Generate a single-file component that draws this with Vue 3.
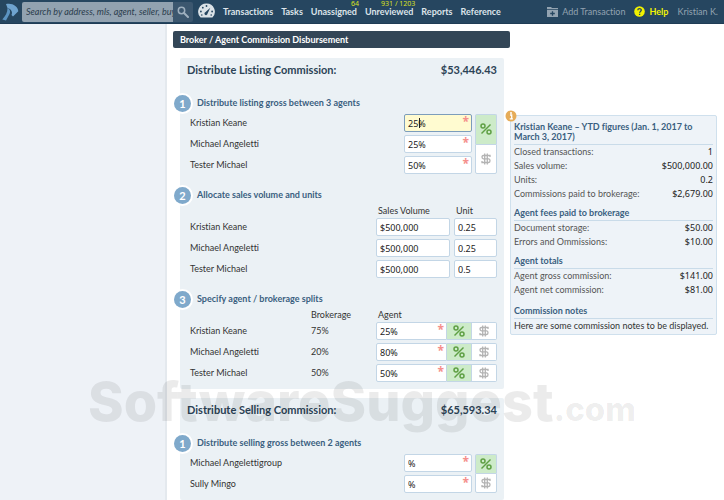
<script setup>
import { reactive } from 'vue'

const links = [
  { text: 'Transactions' },
  { text: 'Tasks' },
  { text: 'Unassigned', badge: '64' },
  { text: 'Unreviewed', badge: '931 / 1203' },
  { text: 'Reports' },
  { text: 'Reference' },
]

const gross = reactive({
  unit: '%',
  rows: [
    { name: 'Kristian Keane', value: '25%', active: true },
    { name: 'Michael Angeletti', value: '25%' },
    { name: 'Tester Michael', value: '50%' },
  ],
})

const volumes = reactive([
  { name: 'Kristian Keane', volume: '$500,000', unit: '0.25' },
  { name: 'Michael Angeletti', volume: '$500,000', unit: '0.25' },
  { name: 'Tester Michael', volume: '$500,000', unit: '0.5' },
])

const splits = reactive([
  { name: 'Kristian Keane', brokerage: '75%', agent: '25%', unit: '%' },
  { name: 'Michael Angeletti', brokerage: '20%', agent: '80%', unit: '%' },
  { name: 'Tester Michael', brokerage: '50%', agent: '50%', unit: '%' },
])

const selling = reactive({
  unit: '%',
  rows: [
    { name: 'Michael Angelettigroup', value: '%' },
    { name: 'Sully Mingo', value: '%' },
  ],
})

const figures = [
  {
    title: 'Kristian Keane – YTD figures (Jan. 1, 2017 to March 3, 2017)',
    rows: [
      ['Closed transactions:', '1'],
      ['Sales volume:', '$500,000.00'],
      ['Units:', '0.2'],
      ['Commissions paid to brokerage:', '$2,679.00'],
    ],
  },
  {
    title: 'Agent fees paid to brokerage',
    rows: [
      ['Document storage:', '$50.00'],
      ['Errors and Ommissions:', '$10.00'],
    ],
  },
  {
    title: 'Agent totals',
    rows: [
      ['Agent gross commission:', '$141.00'],
      ['Agent net commission:', '$81.00'],
    ],
  },
]

const units = ['%', '$']
</script>

<template>
  <div class="page">
    <header class="topbar">
      <a class="logo" href="#" aria-label="Home">
        <svg width="17" height="18" viewBox="0 0 17 18">
          <path d="M4 1C10-.5 16 3 16.300 8.200L11 13.500 9.500 12C11 8.500 9 6 5.500 5z" fill="#6fa3cf" />
          <path d="M5.500 5C8.500 6.500 8.500 9 7.500 11L4 17.500.300 16.500C3.500 13 5.500 9.500 5.500 5z" fill="#5b93c2" />
        </svg>
      </a>
      <form class="search" @submit.prevent>
        <input type="text" aria-label="Search" placeholder="Search by address, mls, agent, seller, buy" />
        <button type="submit" aria-label="Search">
          <svg width="12" height="12" viewBox="0 0 12 12" fill="none" stroke="#9fb0bf">
            <circle cx="4.5" cy="4.5" r="3.2" stroke-width="1.5" />
            <path d="M7 7l4 4" stroke-width="2" stroke-linecap="round" />
          </svg>
        </button>
      </form>
      <a class="gauge" href="#" aria-label="Dashboard">
        <svg width="17" height="17" viewBox="0 0 17 17">
          <path d="M8.500 0.500A8.200 8.200 0 0 0 2.600 14.500h11.800A8.200 8.200 0 0 0 8.500 .5z" fill="#dbe2e7" />
          <path d="M12.300 4.800L9.600 10.600a1.600 1.600 0 1 1-2-1.600z" fill="#264660" />
          <g fill="#264660">
            <circle cx="8.500" cy="3" r=".9" /><circle cx="4.800" cy="4.700" r=".9" />
            <circle cx="2.900" cy="8.500" r=".9" /><circle cx="14.100" cy="8.500" r=".9" />
            <circle cx="3.800" cy="12" r=".8" /><circle cx="13.200" cy="12" r=".8" />
          </g>
        </svg>
      </a>
      <nav class="nav">
        <a v-for="l in links" :key="l.text" href="#">
          {{ l.text }}<span v-if="l.badge" class="badge">{{ l.badge }}</span>
        </a>
      </nav>
      <div class="account">
        <a class="add" href="#">
          <svg width="11" height="11" viewBox="0 0 11 11">
            <path d="M0 1h4l1 1h6v1.200H0zM0 4h11v7H0z" fill="#93a3b1" />
            <path d="M5.500 5.200v4.600M3.200 7.500h4.600" stroke="#264660" stroke-width="1.300" />
          </svg>
          Add Transaction
        </a>
        <a class="help" href="#">
          <svg width="11" height="11" viewBox="0 0 11 11">
            <circle cx="5.500" cy="5.500" r="5.300" fill="#f2f200" />
            <path d="M3.800 4.300c0-2.300 3.500-2.200 3.500-.2 0 1.300-1.700 1.300-1.700 2.600M5.600 7.700v1.300" fill="none" stroke="#264660" stroke-width="1.300" />
          </svg>
          Help
        </a>
        <a class="user" href="#">Kristian K.</a>
      </div>
    </header>

    <div class="body">
      <div class="sidebar"></div>
      <main class="main">
        <div class="form">
          <h1 class="title">Broker / Agent Commission Disbursement</h1>

          <section class="panel">
            <h2 class="panel-head"><span>Distribute Listing Commission:</span><span>$53,446.43</span></h2>

            <div class="step">
              <h3><span class="num">1</span>Distribute listing gross between 3 agents</h3>
              <div class="gross">
                <div class="rows">
                  <div v-for="(r, i) in gross.rows" :key="r.name" class="row">
                    <label :for="'gross' + i">{{ r.name }}</label>
                    <span class="field required">
                      <input :id="'gross' + i" v-model="r.value" type="text" :class="{ active: r.active }" />
                      <i v-if="r.active" class="caret"></i>
                    </span>
                  </div>
                </div>
                <div class="toggle vertical">
                  <button v-for="u in units" :key="u" type="button" :aria-label="u" :class="{ on: gross.unit === u }" @click="gross.unit = u">
                    <svg v-if="u === '%'" width="12" height="12" viewBox="0 0 12 12" fill="none" stroke="currentColor" stroke-width="1.500"><circle cx="3" cy="3" r="2" /><circle cx="9" cy="9" r="2" /><path d="M10.500 1.500l-9 9" /></svg>
                    <svg v-else width="10" height="12" viewBox="0 0 10 12" fill="none" stroke="currentColor" stroke-width="1.300"><path d="M9 4V2.500H2.300Q1 2.500 1 4t1.300 1.800h5.400Q9 6 9 7.700T7.700 9.500H1V8M3.700.5v11M6.300.5v11" /></svg>
                  </button>
                </div>
              </div>
            </div>

            <div class="step">
              <h3><span class="num">2</span>Allocate sales volume and units</h3>
              <div class="row volume labels"><span></span><span>Sales Volume</span><span>Unit</span></div>
              <div class="rows">
                <div v-for="(r, i) in volumes" :key="r.name" class="row volume">
                  <label :for="'volume' + i">{{ r.name }}</label>
                  <input :id="'volume' + i" v-model="r.volume" type="text" />
                  <input v-model="r.unit" type="text" :aria-label="r.name + ' unit'" />
                </div>
              </div>
            </div>

            <div class="step">
              <h3><span class="num">3</span>Specify agent / brokerage splits</h3>
              <div class="row split labels"><span></span><span>Brokerage</span><span>Agent</span></div>
              <div class="rows">
                <div v-for="(r, i) in splits" :key="r.name" class="row split">
                  <label :for="'split' + i">{{ r.name }}</label>
                  <span>{{ r.brokerage }}</span>
                  <div class="combo">
                    <span class="field required"><input :id="'split' + i" v-model="r.agent" type="text" /></span>
                    <div class="toggle">
                      <button v-for="u in units" :key="u" type="button" :aria-label="u" :class="{ on: r.unit === u }" @click="r.unit = u">
                        <svg v-if="u === '%'" width="12" height="12" viewBox="0 0 12 12" fill="none" stroke="currentColor" stroke-width="1.500"><circle cx="3" cy="3" r="2" /><circle cx="9" cy="9" r="2" /><path d="M10.500 1.500l-9 9" /></svg>
                        <svg v-else width="10" height="12" viewBox="0 0 10 12" fill="none" stroke="currentColor" stroke-width="1.300"><path d="M9 4V2.500H2.300Q1 2.500 1 4t1.300 1.800h5.400Q9 6 9 7.700T7.700 9.500H1V8M3.700.5v11M6.300.5v11" /></svg>
                      </button>
                    </div>
                  </div>
                </div>
              </div>
            </div>
          </section>

          <section class="panel">
            <h2 class="panel-head"><span>Distribute Selling Commission:</span><span>$65,593.34</span></h2>
            <div class="step">
              <h3><span class="num">1</span>Distribute selling gross between 2 agents</h3>
              <div class="gross">
                <div class="rows">
                  <div v-for="(r, i) in selling.rows" :key="r.name" class="row">
                    <label :for="'selling' + i">{{ r.name }}</label>
                    <span class="field required"><input :id="'selling' + i" v-model="r.value" type="text" /></span>
                  </div>
                </div>
                <div class="toggle vertical">
                  <button v-for="u in units" :key="u" type="button" :aria-label="u" :class="{ on: selling.unit === u }" @click="selling.unit = u">
                    <svg v-if="u === '%'" width="12" height="12" viewBox="0 0 12 12" fill="none" stroke="currentColor" stroke-width="1.500"><circle cx="3" cy="3" r="2" /><circle cx="9" cy="9" r="2" /><path d="M10.500 1.500l-9 9" /></svg>
                    <svg v-else width="10" height="12" viewBox="0 0 10 12" fill="none" stroke="currentColor" stroke-width="1.300"><path d="M9 4V2.500H2.300Q1 2.500 1 4t1.300 1.800h5.400Q9 6 9 7.700T7.700 9.500H1V8M3.700.5v11M6.300.5v11" /></svg>
                  </button>
                </div>
              </div>
            </div>
          </section>
        </div>

        <aside class="info">
          <svg class="info-icon" width="12" height="12" viewBox="0 0 12 12">
            <circle cx="6" cy="6" r="5.500" fill="#e6ac58" />
            <path d="M5 5h1.700v3.500M4.700 8.900h3.200" fill="none" stroke="#fff" stroke-width="1.300" />
            <circle cx="6" cy="2.900" r="1" fill="#fff" />
          </svg>
          <section v-for="f in figures" :key="f.title">
            <h4>{{ f.title }}</h4>
            <dl>
              <div v-for="r in f.rows" :key="r[0]"><dt>{{ r[0] }}</dt><dd>{{ r[1] }}</dd></div>
            </dl>
          </section>
          <section class="notes">
            <h4>Commission notes</h4>
            <p>Here are some commission notes to be displayed.</p>
          </section>
        </aside>
      </main>
    </div>
    <div class="watermark">SoftwareSuggest<small>.com</small></div>
  </div>
</template>

<style>
html {
  scrollbar-width: none;
}
body {
  margin: 0;
}
</style>

<style scoped>
* {
  box-sizing: border-box;
}
.page {
  position: relative;
  display: flex;
  flex-direction: column;
  min-height: 100vh;
  background: #fff;
  color: #333;
  font: 9px/14px Lato, "Noto Sans", sans-serif;
  font-variant-ligatures: none;
}
h1, h2, h3, h4, p, dl, dd {
  margin: 0;
}
a {
  color: inherit;
  text-decoration: none;
}
svg {
  display: block;
  flex: none;
}

.topbar {
  display: flex;
  align-items: center;
  height: 24px;
  padding: 0 6px 0 2px;
  background: #264660;
  border-bottom: 1px solid #1f3c55;
  color: #dde4ea;
  font-weight: 700;
}
.logo {
  width: 20px;
}
.search {
  display: flex;
  width: 171px;
  height: 20px;
  border-radius: 2px;
  overflow: hidden;
}
.search input {
  flex: 1;
  min-width: 0;
  padding: 0 0 0 4px;
  border: 0;
  border-radius: 0;
  background: #92a2b0;
  color: #2b3d4d;
  font: italic 9px/14px Lato, sans-serif;
}
.search input::placeholder {
  color: #2b3d4d;
  opacity: 1;
}
.search button {
  display: grid;
  place-items: center;
  width: 20px;
  padding: 0;
  border: 0;
  background: #3c576f;
}
.gauge {
  margin-left: 5px;
}
.nav {
  display: flex;
  gap: 8px;
  margin-left: 8px;
}
.nav a {
  position: relative;
}
.badge {
  position: absolute;
  right: -2px;
  top: -5px;
  color: #d9e021;
  font: 7px/8px "Noto Sans", sans-serif;
  white-space: nowrap;
}
.account {
  display: flex;
  gap: 9px;
  margin-left: auto;
  color: #93a3b1;
  font-weight: 400;
}
.account a {
  display: flex;
  align-items: center;
  gap: 4px;
}
.account .help {
  color: #f2f200;
  font-weight: 700;
}

.body {
  flex: 1;
  display: grid;
  grid-template-columns: 167fr 557fr;
}
.sidebar {
  background: #eef2f7;
  border-right: 2px solid #e4e9ee;
}
.main {
  display: grid;
  grid-template-columns: 337fr 207fr;
  align-items: start;
  padding: 7px 7px 0 6px;
}
.title {
  height: 17px;
  margin-bottom: 10px;
  padding-left: 7px;
  border-radius: 2px;
  background: #334657;
  color: #fff;
  font-size: 9px;
  line-height: 17px;
}
.panel {
  margin: 0 6px 9px 7px;
  padding: 0 7px 7px;
  border-radius: 2px;
  background: #ebf1f5;
}
.panel-head {
  display: flex;
  justify-content: space-between;
  color: #2c4356;
  font-size: 11px;
  line-height: 24px;
}
.step {
  margin-top: 12px;
  padding-left: 3px;
}
.step h3 {
  display: flex;
  align-items: center;
  gap: 6px;
  height: 18px;
  margin-left: -16px;
  color: #3a5f80;
  font-size: 9px;
}
.num {
  width: 17px;
  border-radius: 50%;
  background: #7fa9cb;
  box-shadow: 0 0 0 2px #fff;
  color: #fff;
  font-size: 11px;
  line-height: 17px;
  text-align: center;
}
.gross {
  display: flex;
  gap: 3px;
  margin-top: 2px;
}
.rows {
  flex: 1;
  display: grid;
  gap: 3px;
}
.row {
  display: grid;
  grid-template-columns: 1fr 68px;
  align-items: center;
}
.row.volume {
  grid-template-columns: 1fr 74px 43px;
  column-gap: 4px;
}
.row.split {
  grid-template-columns: 121fr 65fr 121px;
}
.labels {
  height: 14px;
}
.labels span:nth-child(n + 3) {
  padding-left: 2px;
}
.volume.labels span:nth-child(2) {
  padding-left: 2px;
}
.row input {
  width: 100%;
  min-width: 0;
  height: 18px;
  padding: 0 3px;
  border: 1px solid #c3d6e6;
  border-radius: 2px;
  background: #fff;
  color: #222;
  font: 9px/14px "Noto Sans", sans-serif;
}
.row input.active {
  border-color: #7c9dbb;
  background: #fffbd0;
}
.field {
  position: relative;
  display: block;
  flex: 1;
}
.required::after {
  content: "*";
  position: absolute;
  top: 1px;
  right: 3px;
  color: #f58f8b;
  font: 700 12px/14px "Noto Sans", sans-serif;
}
.caret {
  position: absolute;
  top: 4px;
  left: 15px;
  width: 1px;
  height: 10px;
  background: #222;
}
.toggle {
  display: flex;
}
.toggle button {
  display: grid;
  place-items: center;
  width: 25px;
  padding: 0;
  border: 1px solid #c3d6e6;
  border-left: 0;
  background: #fff;
  color: #b3b3b3;
}
.toggle button:last-child {
  border-radius: 0 2px 2px 0;
}
.toggle button.on {
  background: #cdebc9;
  color: #5fa044;
}
.toggle.vertical {
  flex-direction: column;
  width: 22px;
}
.toggle.vertical button {
  flex: 1;
  width: 100%;
  border-left: 1px solid #c3d6e6;
  border-radius: 0 0 2px 2px;
}
.toggle.vertical button:first-child {
  border-bottom: 0;
  border-radius: 2px 2px 0 0;
}
.combo {
  display: flex;
}
.combo input {
  border-radius: 2px 0 0 2px;
}

.info {
  position: relative;
  margin-top: 84px;
  padding: 6px 3px 1px;
  border: 1px solid #cfe0ed;
  border-radius: 2px;
  background: #eef3f8;
  color: #555;
}
.info-icon {
  position: absolute;
  top: -6px;
  left: -6px;
}
.info section + section {
  margin-top: 7px;
}
.info .notes {
  padding-top: 2px;
  color: #333;
}
.info h4 {
  padding-bottom: 2px;
  border-bottom: 1px solid #c9dbe9;
  color: #3a5f80;
  font-size: 9px;
  line-height: 10px;
}
.info dl div {
  display: flex;
  justify-content: space-between;
}
.info dd {
  color: #222;
  font-family: "Noto Sans", sans-serif;
}

.watermark {
  position: absolute;
  top: 369px;
  left: 88px;
  color: rgba(0, 0, 0, 0.08);
  font: 800 54px/66px Inter, sans-serif;
  white-space: nowrap;
  pointer-events: none;
}
.watermark small {
  font-size: 33px;
}
</style>
